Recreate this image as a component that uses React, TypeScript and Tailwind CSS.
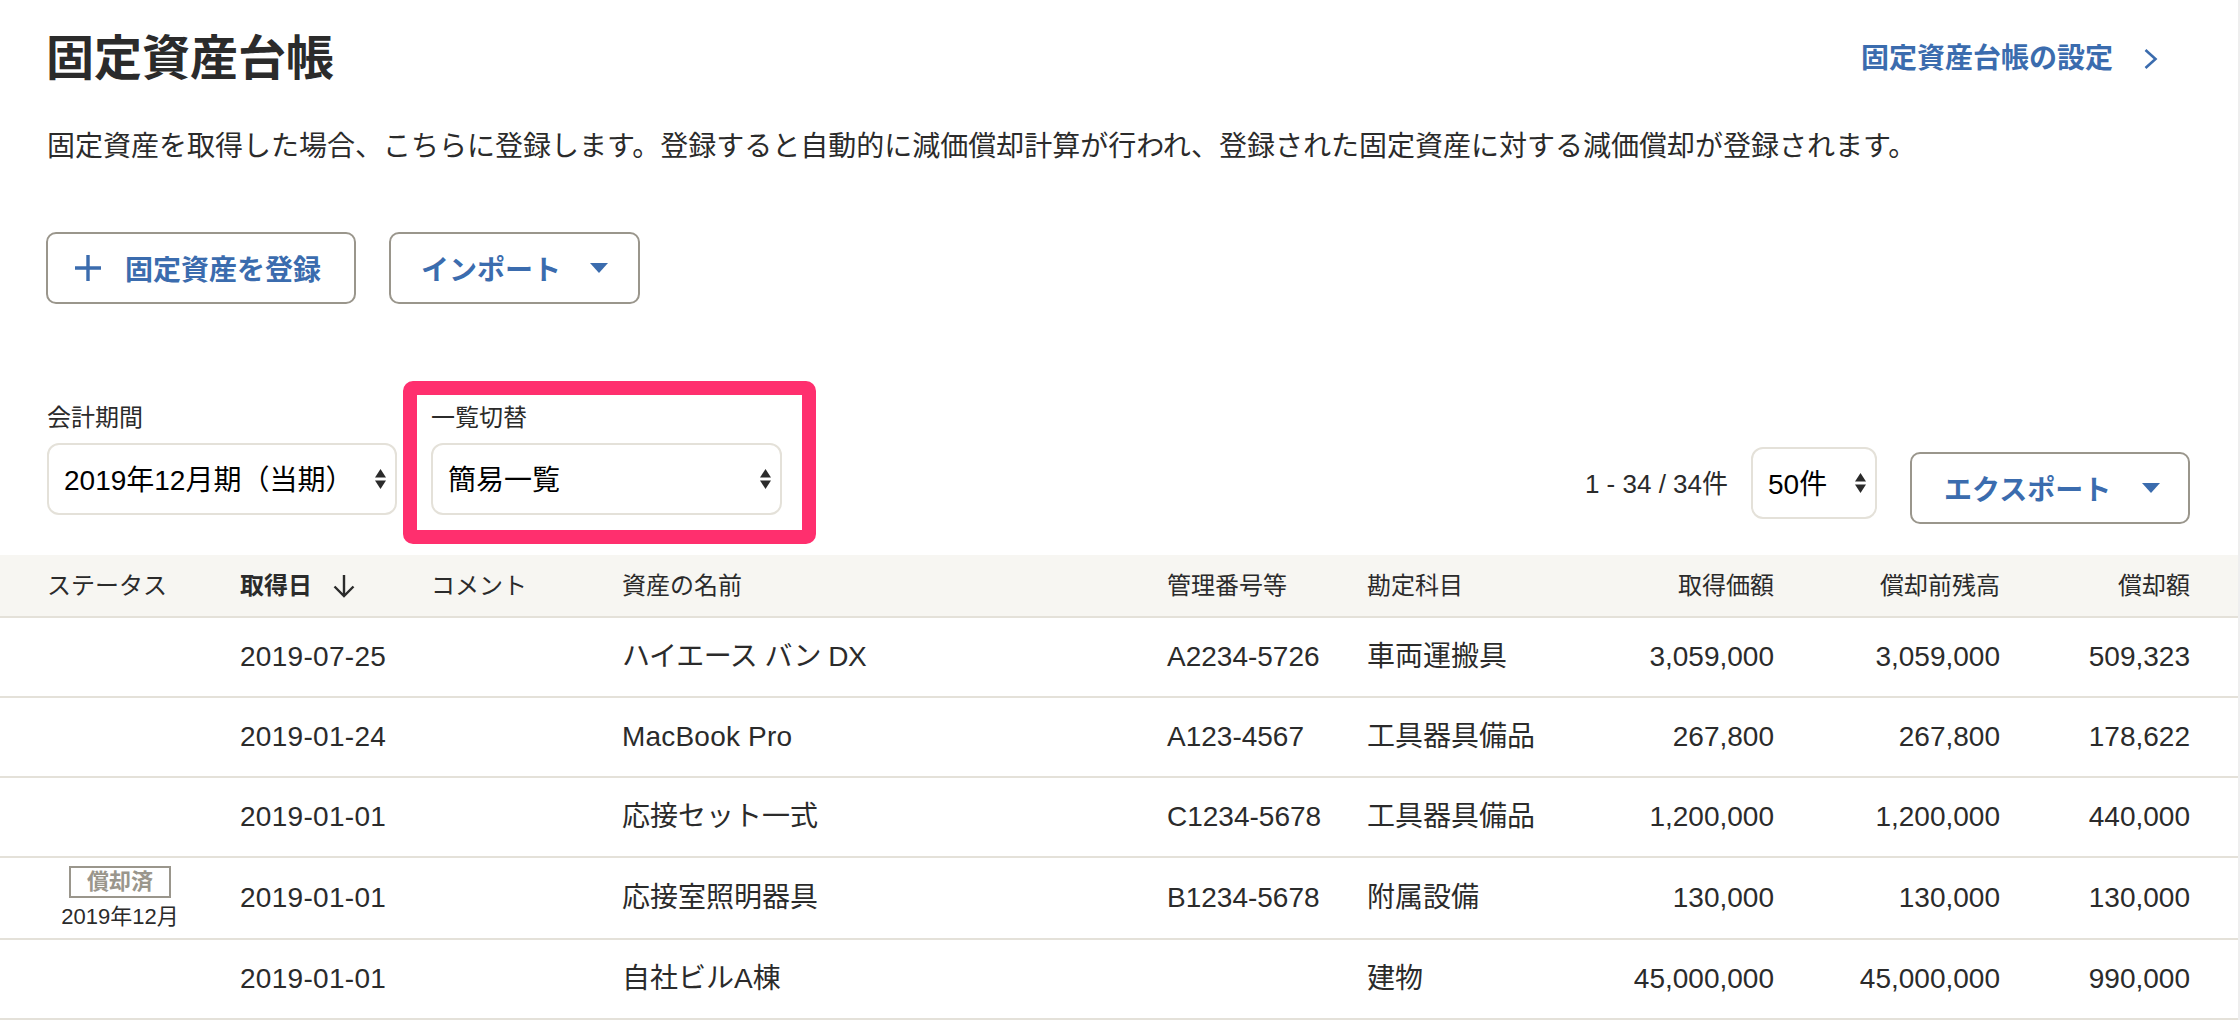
const font = "font-['Liberation_Sans','Noto_Sans_CJK_JP',sans-serif]";

function Caret({ className }: { className: string }) {
  return (
    <svg viewBox="0 0 18 10" className={className} fill="#3b6cae" aria-hidden="true">
      <path d="M0 0h18L9 10z" />
    </svg>
  );
}

function UpDown() {
  return (
    <svg viewBox="0 0 11 20" className="h-5 w-[11px] shrink-0" fill="#2b2b2b" aria-hidden="true">
      <path d="M5.5 0L11 8.5H0z" />
      <path d="M0 11.5h11L5.5 20z" />
    </svg>
  );
}

function Select({ label, className }: { label: string; className: string }) {
  return (
    <div className={`flex h-[72px] items-center justify-between rounded-xl border-2 border-[#e4e1d9] bg-white pl-[15px] pr-[9px] text-[28px] text-black ${className}`}>
      <span className="whitespace-nowrap pt-[3px]">{label}</span>
      <UpDown />
    </div>
  );
}

function ActionButton({ children, className }: { children: React.ReactNode; className: string }) {
  return (
    <button className={`flex h-[72px] items-center rounded-[10px] border-2 border-[#9a968c] bg-white text-[28px] font-bold text-[#3b6cae] ${className}`}>
      {children}
    </button>
  );
}

const rows = [
  ["2019-07-25", "ハイエース バン DX", "A2234-5726", "車両運搬具", "3,059,000", "3,059,000", "509,323"],
  ["2019-01-24", "MacBook Pro", "A123-4567", "工具器具備品", "267,800", "267,800", "178,622"],
  ["2019-01-01", "応接セット一式", "C1234-5678", "工具器具備品", "1,200,000", "1,200,000", "440,000"],
  ["2019-01-01", "応接室照明器具", "B1234-5678", "附属設備", "130,000", "130,000", "130,000"],
  ["2019-01-01", "自社ビルA棟", "", "建物", "45,000,000", "45,000,000", "990,000"],
];

export default function App() {
  return (
    <div className={`relative h-[1020px] w-[2240px] overflow-hidden bg-white text-[#2b2b2b] ${font}`}>
      <header className="flex h-[113px] items-start justify-between pl-[46px] pr-[82px]">
        <h1 className="mt-[29px] text-[48px] font-bold leading-[60px]">固定資産台帳</h1>
        <a className="mt-[39px] flex items-center gap-[31px] text-[28px] font-bold leading-[40px] text-[#3b6cae]">
          固定資産台帳の設定
          <svg viewBox="0 0 14 20" className="h-5 w-[14px]" fill="none" stroke="#3b6cae" strokeWidth="2.6" aria-hidden="true">
            <path d="M1.5 1l10 9-10 9" />
          </svg>
        </a>
      </header>

      <p className="mt-[14px] text-[28px] leading-[40px]">
        <span className="pl-[47px]">固定資産を取得した場合、こちらに登録します。登録すると自動的に減価償却計算が行われ、登録された固定資産に対する減価償却が登録されます。</span>
      </p>

      <div className="mt-[65px] flex gap-[33px] pl-[46px]">
        <ActionButton className="w-[310px] pl-[27px]">
          <svg viewBox="0 0 26 26" className="mr-[24px] h-[26px] w-[26px]" stroke="#3b6cae" strokeWidth="3.4" aria-hidden="true">
            <path d="M13 0v26M0 13h26" />
          </svg>
          <span className="pt-[6px]">固定資産を登録</span>
        </ActionButton>
        <ActionButton className="w-[251px] pl-[30px]">
          <span className="pt-[6px]">インポート</span>
          <Caret className="ml-[29px] h-[10px] w-[18px]" />
        </ActionButton>
      </div>

      <div className="mt-[100px] flex h-[151px] items-start pl-[47px] pr-[50px]">
        <div className="w-[350px]">
          <div className="mb-[13px] mt-[2px] text-[24px] leading-[24px]">会計期間</div>
          <Select label="2019年12月期（当期）" className="w-[350px]" />
        </div>
        <div className="ml-[34px] w-[351px]">
          <div className="mb-[13px] mt-[2px] text-[24px] leading-[24px]">一覧切替</div>
          <Select label="簡易一覧" className="w-[351px]" />
        </div>
        <div className="ml-auto mt-[43px] flex items-start">
          <span className="mt-[19px] text-[26px] leading-[36px]">1 - 34 / 34件</span>
          <Select label="50件" className="ml-[23px] w-[126px]" />
          <ActionButton className="ml-[33px] mt-[5px] w-[280px] pl-[32px]">
            <span className="pt-[6px]">エクスポート</span>
            <Caret className="ml-[31px] h-[10px] w-[18px]" />
          </ActionButton>
        </div>
      </div>

      <div className="absolute left-[403px] top-[381px] h-[163px] w-[413px] rounded-[10px] border-[14px] border-[#ff2f6e]" />

      <table className="w-[2238px] table-fixed border-collapse">
        <colgroup>
          <col className="w-[240px]" />
          <col className="w-[191px]" />
          <col className="w-[191px]" />
          <col className="w-[545px]" />
          <col className="w-[200px]" />
          <col className="w-[207px]" />
          <col className="w-[200px]" />
          <col className="w-[226px]" />
          <col className="w-[238px]" />
        </colgroup>
        <thead>
          <tr className="h-[62px] border-b-2 border-[#e4e1d9] bg-[#f7f6f2] text-[24px] font-normal">
            <th className="pl-[47px] text-left font-normal">ステータス</th>
            <th className="text-left font-bold">
              <span className="flex items-center gap-[21px]">
                取得日
                <svg viewBox="0 0 22 24" className="h-6 w-[22px]" fill="none" stroke="#2b2b2b" strokeWidth="2.4" aria-hidden="true">
                  <path d="M11 1v21M1.5 12.5L11 22l9.5-9.5" />
                </svg>
              </span>
            </th>
            <th className="text-left font-normal">コメント</th>
            <th className="text-left font-normal">資産の名前</th>
            <th className="text-left font-normal">管理番号等</th>
            <th className="text-left font-normal">勘定科目</th>
            <th className="text-right font-normal">取得価額</th>
            <th className="text-right font-normal">償却前残高</th>
            <th className="pr-[48px] text-right font-normal">償却額</th>
          </tr>
        </thead>
        <tbody className="text-[28px]">
          {rows.map((r, i) => (
            <tr key={i} className={`border-b-2 border-[#e4e1d9] ${i === 3 ? "h-[82px]" : "h-[80px]"}`}>
              <td className="text-center">
                {i === 3 && (
                  <div className="flex flex-col items-center">
                    <span className="flex h-[32px] w-[102px] items-center justify-center border-2 border-[#9a968c] text-[22px] font-bold leading-none text-[#9a968c]">償却済</span>
                    <span className="mt-[6px] text-[22px] leading-[26px]">2019年12月</span>
                  </div>
                )}
              </td>
              <td className="tracking-[0.3px]">{r[0]}</td>
              <td />
              <td className={i === 0 ? "tracking-[-0.5px]" : i === 1 ? "tracking-[0.2px]" : ""}>{r[1]}</td>
              <td>{r[2]}</td>
              <td>{r[3]}</td>
              <td className="text-right">{r[4]}</td>
              <td className="text-right">{r[5]}</td>
              <td className="pr-[48px] text-right">{r[6]}</td>
            </tr>
          ))}
        </tbody>
      </table>

      <div className="absolute right-0 top-0 h-full w-[2px] bg-[#eeeeee]" />
    </div>
  );
}
